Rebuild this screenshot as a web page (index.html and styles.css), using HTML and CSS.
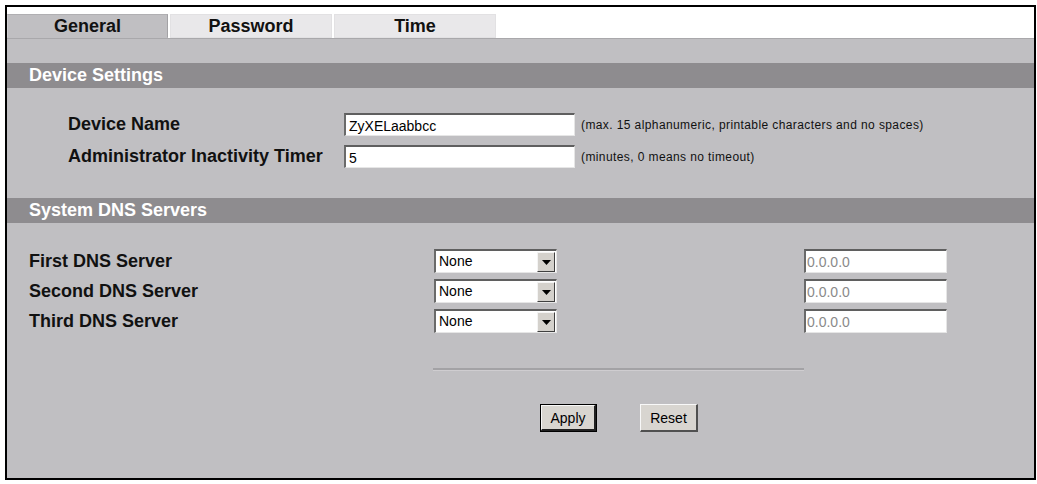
FILE: index.html
```html
<!DOCTYPE html>
<html lang="en">
<head>
    <meta charset="UTF-8">
    <title>General</title>
    <link rel="stylesheet" href="styles.css">
</head>
<body>
    <div class="frame">
        <div class="tabs">
            <div class="tab active">General</div>
            <div class="tab">Password</div>
            <div class="tab">Time</div>
        </div>
        <div class="content">
            <div class="spacer"></div>

            <div class="section-head">Device Settings</div>
            <div class="device-rows">
                <label class="label">Device Name</label>
                <input type="text" class="field" value="ZyXELaabbcc">
                <span class="help">(max. 15 alphanumeric, printable characters and no spaces)</span>

                <label class="label">Administrator Inactivity Timer</label>
                <input type="text" class="field" value="5">
                <span class="help">(minutes, 0 means no timeout)</span>
            </div>

            <div class="section-head">System DNS Servers</div>
            <div class="dns-rows">
                <label class="label">First DNS Server</label>
                <div class="select"><span class="select-value">None</span><span class="drop"><svg width="9" height="5" viewBox="0 0 9 5"><path d="M0 0h9L4.5 5z" fill="#000"/></svg></span></div>
                <input type="text" class="field ip" value="0.0.0.0" disabled>

                <label class="label">Second DNS Server</label>
                <div class="select"><span class="select-value">None</span><span class="drop"><svg width="9" height="5" viewBox="0 0 9 5"><path d="M0 0h9L4.5 5z" fill="#000"/></svg></span></div>
                <input type="text" class="field ip" value="0.0.0.0" disabled>

                <label class="label">Third DNS Server</label>
                <div class="select"><span class="select-value">None</span><span class="drop"><svg width="9" height="5" viewBox="0 0 9 5"><path d="M0 0h9L4.5 5z" fill="#000"/></svg></span></div>
                <input type="text" class="field ip" value="0.0.0.0" disabled>
            </div>

            <div class="divider"></div>

            <div class="buttons">
                <button class="btn default">Apply</button>
                <button class="btn">Reset</button>
            </div>
        </div>
    </div>
</body>
</html>
```

FILE: styles.css
```css
body {
    margin: 0;
    padding: 5px 0 0 5px;
    background-color: #fff;
    font-family: "Liberation Sans", Arial, sans-serif;
}
.frame {
    box-sizing: border-box;
    width: 1031px;
    height: 475px;
    border: 2px solid #000;
    display: flex;
    flex-direction: column;
    background-color: #fff;
}
/* tabs */
.tabs {
    display: flex;
    gap: 2px;
    padding-top: 7px;
    height: 31px;
    box-sizing: border-box;
}
.tab {
    box-sizing: border-box;
    width: 162px;
    height: 24px;
    line-height: 22px;
    text-align: center;
    font-size: 18px;
    font-weight: bold;
    color: #111;
    background-color: #e9e8ea;
    border: 1px solid #e2e1e3;
}
.tab.active {
    width: 161px;
    background-color: #c0bfc2;
    border-color: #b0afb2 #a3a2a5 #c0bfc2 #d0cfd2;
}
.content {
    flex: 1;
    background-color: #c0bfc2;
}
.spacer {
    height: 24px;
    border-top: 1px solid #a9a8ab;
}
.section-head {
    height: 25px;
    line-height: 25px;
    padding-left: 22px;
    background-color: #8e8c8f;
    color: #fff;
    font-size: 18px;
    font-weight: bold;
}
.label {
    font-size: 18px;
    font-weight: bold;
    color: #111;
}
/* device settings */
.device-rows {
    display: grid;
    grid-template-columns: 276px 232px auto;
    grid-auto-rows: 23px;
    row-gap: 9px;
    align-items: center;
    padding: 25px 0 30px 61px;
}
.field {
    box-sizing: border-box;
    height: 23px;
    margin: 0;
    padding: 1px 3px 0;
    font-family: "Liberation Sans", Arial, sans-serif;
    font-size: 14px;
    color: #000;
    background-color: #fff;
    border-style: solid;
    border-width: 2px 1px 1px 2px;
    border-color: #5f5f5f #e6e6e6 #e6e6e6 #6a6a6a;
    outline: none;
}
.device-rows .field {
    width: 231px;
}
.help {
    padding-left: 5px;
    font-size: 12px;
    letter-spacing: 0.4px;
    color: #111;
}
/* dns servers */
.dns-rows {
    display: grid;
    grid-template-columns: 405px 370px 143px;
    grid-auto-rows: 24px;
    row-gap: 6px;
    align-items: center;
    padding: 26px 0 0 22px;
}
.select {
    box-sizing: border-box;
    width: 123px;
    height: 24px;
    display: flex;
    align-items: stretch;
    background-color: #fff;
    border-style: solid;
    border-width: 2px 1px 1px 2px;
    border-color: #5f5f5f #e6e6e6 #e6e6e6 #6a6a6a;
}
.select-value {
    flex: 1;
    padding-left: 3px;
    line-height: 21px;
    font-size: 14px;
    color: #000;
}
.drop {
    box-sizing: border-box;
    width: 18px;
    margin: 1px 1px 0 0;
    display: flex;
    align-items: center;
    justify-content: center;
    background-color: #d4d1cc;
    border-style: solid;
    border-width: 1px;
    border-color: #f4f4f4 #404040 #404040 #f4f4f4;
}
.field.ip {
    width: 143px;
    height: 24px;
    color: #8a8a8a;
    padding-left: 1px;
}
.divider {
    width: 371px;
    height: 2px;
    margin: 35px 0 0 426px;
    background-color: #a3a2a5;
    border-bottom: 1px solid #cfcdd0;
}
.buttons {
    display: flex;
    gap: 43px;
    padding: 33px 0 0 533px;
}
.btn {
    box-sizing: border-box;
    height: 28px;
    padding: 0;
    width: 58px;
    font-family: "Liberation Sans", Arial, sans-serif;
    font-size: 14px;
    color: #000;
    background-color: #d8d5d0;
    border-style: solid;
    border-width: 1px 2px 2px 1px;
    border-color: #f8f8f8 #505050 #505050 #f8f8f8;
}
.btn.default {
    width: 57px;
    outline: 1px solid #000;
    outline-offset: -1px;
    border-width: 2px 3px 3px 2px;
    border-color: #f8f8f8 #202020 #202020 #f8f8f8;
}
```
